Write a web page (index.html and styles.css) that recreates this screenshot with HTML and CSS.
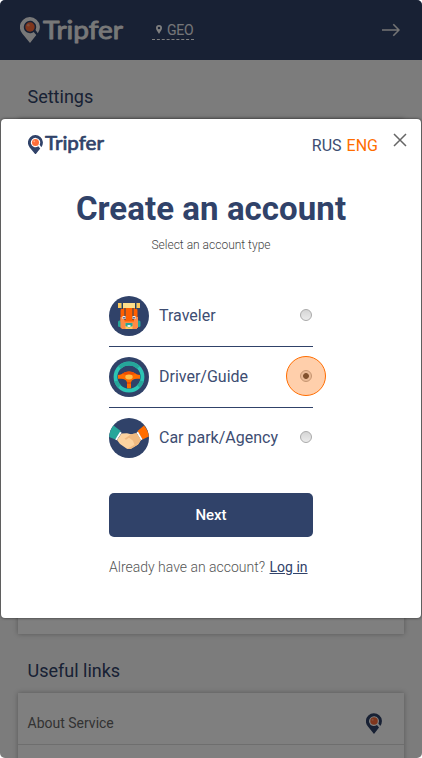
FILE: index.html
```
<!DOCTYPE html>
<html lang="en">
<head>
<meta charset="utf-8">
<title>Tripfer</title>
<link rel="stylesheet" href="styles.css">
</head>
<body>
<svg class="defs" aria-hidden="true">
  <symbol id="pin" viewBox="0 0 20 26">
    <path fill="currentColor" d="M17.800 16.200A10 10 0 1 0 2.200 16.500L10 26l6.300-8L13.700 15A6.200 6.200 0 1 1 15.500 12.900z"/>
    <circle class="pin-dot" cx="10" cy="10" r="4.700"/>
    <circle class="pin-shine" cx="8.300" cy="8.300" r="1.300"/>
  </symbol>
</svg>
<div class="screen">
  <header class="topbar">
    <div class="logo logo-large">
      <svg class="logo-pin"><use href="#pin"/></svg>
      <svg class="logo-word" viewBox="0 0 80 28"><text x="0" y="22" textLength="80" lengthAdjust="spacingAndGlyphs">Tripfer</text></svg>
    </div>
    <a class="geo">
      <svg class="geo-pin" viewBox="0 0 6 9"><path fill="currentColor" fill-rule="evenodd" d="M3 0a3 3 0 0 0-3 3c0 1.600 1.300 3 3 6 1.700-3 3-4.400 3-6a3 3 0 0 0-3-3zm0 1.700a1.300 1.300 0 1 1 0 2.600 1.300 1.300 0 0 1 0-2.600z"/></svg>
      <span>GEO</span>
    </a>
    <svg class="arrow" viewBox="0 0 18 14"><path d="M0 7h17M11.300 1.200 17 7l-5.700 5.800"/></svg>
  </header>
  <main class="page">
    <h2 class="section-title">Settings</h2>
    <section class="card card-settings"></section>
    <h2 class="section-title">Useful links</h2>
    <section class="card">
      <div class="row"><span>About Service</span><svg class="row-pin"><use href="#pin"/></svg></div>
      <div class="row"></div>
    </section>
  </main>
  <div class="overlay">
    <div class="modal">
      <div class="modal-head">
        <div class="logo logo-small">
          <svg class="logo-pin"><use href="#pin"/></svg>
          <svg class="logo-word" viewBox="0 0 80 28"><text x="0" y="22" textLength="80" lengthAdjust="spacingAndGlyphs">Tripfer</text></svg>
        </div>
        <div class="langs"><a>RUS</a><a class="active">ENG</a></div>
        <svg class="close" viewBox="0 0 14 14"><path d="m1 1 12 12M13 1 1 13"/></svg>
      </div>
      <h1>Create an account</h1>
      <p class="hint">Select an account type</p>
      <div class="options">
        <label class="option">
          <svg class="badge" viewBox="0 0 40 40">
            <circle cx="20" cy="20" r="20" fill="#304269"/>
            <rect x="9" y="24.500" width="22.500" height="6.500" rx="1.500" fill="#26a69a"/>
            <path fill="#ff5f00" d="M11.500 15q0-3.500 3-3.500h11q3 0 3 3.500v11h-17z"/>
            <path fill="#ff8a45" d="M11.500 21h4v11h-4zM25 21h4v11h-4zM12.500 25.500H28V33H12.500z"/>
            <rect x="9" y="7" width="22" height="5" rx="1.200" fill="#ffe08a"/>
            <path fill="#ffcb5b" d="M9 7h3v5H9zm19 0h3v5h-3z"/>
            <path fill="#26425b" d="M12.500 7H14v6h-1.500zM26 7h1.500v6H26zM15.500 12h1v12h-1zm8 0h1v12h-1z"/>
            <path fill="#e9eef2" d="M13.500 20h3v3h-3zm10 0h3v3h-3z"/>
            <path fill="#304269" d="M14.300 21h1.400v1.400h-1.400zm10 0h1.400v1.400h-1.400z"/>
            <path fill="#ffcb5b" d="M16.500 27h7v6h-7z"/>
            <path fill="#26a69a" d="M16.500 27h7v3L20 31.500 16.500 30z"/>
            <path fill="#e9eef2" d="M18.500 29h3v2h-3z"/>
          </svg>
          <span class="label">Traveler</span><i class="radio"></i>
        </label>
        <label class="option">
          <svg class="badge" viewBox="0 0 40 40">
            <circle cx="20" cy="20" r="20" fill="#304269"/>
            <circle cx="20" cy="20" r="13.500" fill="none" stroke="#2cc5b5" stroke-width="3.800"/>
            <path d="M10.500 10.500a13.500 13.500 0 0 1 19 0M10.500 29.500A13.500 13.500 0 0 1 7 24M29.500 29.500A13.500 13.500 0 0 0 33 24" fill="none" stroke="#26a69a" stroke-width="3.800"/>
            <path fill="#ff6d00" d="M9 18c4 0 6-3.500 11-3.500s7 3.500 11 3.500v3.800h-3c-3.300 0-5.500 1.200-6 3.700v5.700h-4v-5.700c-.5-2.500-2.700-3.700-6-3.700H9z"/>
            <path fill="#f04e00" d="M13 16.800c2-1.300 4-2.300 7-2.300s5 1 7 2.300l-3.500 1h-7zM18 25h4v2h-4z"/>
            <ellipse cx="20" cy="20" rx="3.700" ry="2.400" fill="#ffc14d"/>
          </svg>
          <span class="label">Driver/Guide</span><i class="radio checked"></i>
        </label>
        <label class="option">
          <svg class="badge" viewBox="0 0 40 40">
            <circle cx="20" cy="20" r="20" fill="#304269"/>
            <path fill="#26a69a" d="M.2 19A20 20 0 0 1 4.500 7.500L11.800 13 6.300 21.500z"/>
            <path fill="#ff6d00" d="M39.800 18.500A20 20 0 0 0 35 7.500L28.500 13l5 8.500z"/>
            <path fill="#fff" d="m11 13.800 1.700 1-5 7.500-1.500-.9zM29 13.500l-1.500 1.200 4.500 7.500 1.500-.9z"/>
            <path fill="#fcd3a0" d="m12.500 15.500 5.500-.3 4 1 5.500-1L32 22l-3 4.500-6.500 4q-2.500 1-5 0L11 26l-3-4z"/>
            <path fill="#efb980" d="m22 16.200 5.500-1L32 22l-3 4.500-6.500 4q-2 .7-4 .2l7-4-1.500-4-4-3-3 2-1.500-1z"/>
          </svg>
          <span class="label">Car park/Agency</span><i class="radio"></i>
        </label>
      </div>
      <button class="next">Next</button>
      <p class="login">Already have an account? <a>Log in</a></p>
    </div>
  </div>
</div>
</body>
</html>
```
FILE: styles.css
```
* { box-sizing: border-box; }
body { margin: 0; background: #fff; font-family: Roboto, sans-serif; color: #304269; }
h1, h2, p { margin: 0; }
.defs { position: absolute; width: 0; height: 0; }
.screen { position: relative; width: 422px; height: 758px; overflow: hidden; border-radius: 5px; background: #f8f8f8; }

.topbar { display: flex; align-items: center; height: 60px; padding: 0 22px 0 20px; background: #304269; color: #fff; }
.logo { display: flex; align-items: center; }
.logo-word { overflow: visible; }
.logo-word text { font: 400 25px Lato, sans-serif; fill: currentColor; stroke: currentColor; stroke-width: .9px; stroke-linejoin: round; }
.logo-large .logo-pin { width: 20px; height: 26px; margin-right: 3px; }
.logo-large .logo-word { width: 80px; height: 28px; margin-top: 1px; }
.logo-large { color: #f0f0f0; }
.pin-dot { fill: #ff6d3a; }
.pin-shine { fill: #ffa17d; }
.geo { display: flex; align-items: center; width: 42px; height: 20px; margin-left: 29px; padding-left: 4px; gap: 5px; border-bottom: 1px dashed #fff; font-size: 14px; letter-spacing: -.3px; }
.geo span { opacity: .9; }
.geo-pin { width: 6px; height: 9px; }
.arrow { width: 18px; height: 14px; margin-left: auto; fill: none; stroke: #e8e8e8; stroke-width: 1.6; }

.page { padding: 0 18px; }
.section-title { padding: 25px 9.500px 10px; font-size: 18px; font-weight: 400; line-height: 24px; }
.card { background: #fff; box-shadow: 0 0 5px rgba(0, 0, 0, .3); }
.card-settings { height: 515px; }
.row { display: flex; align-items: center; justify-content: space-between; height: 52px; padding: 8px 22px 0 9.500px; border-bottom: 1px solid #ddd; font-size: 14px; color: #666; }
.row-pin { width: 16px; height: 21px; margin-top: 2px; color: #304269; }

.overlay { position: absolute; inset: 0; padding: 119px 1px 0; background: rgba(0, 0, 0, .5); }
.modal { display: flex; flex-direction: column; align-items: center; height: 499px; border-radius: 4px; background: #fff; box-shadow: 0 0 3px rgba(0, 0, 0, .65); }
.modal-head { display: flex; align-items: flex-start; width: 100%; height: 70px; padding: 15px 14px 0 27px; }
.logo-small .logo-pin { width: 15px; height: 19.500px; margin-right: 2px; }
.logo-small .logo-word { width: 59px; height: 20.650px; margin-top: 0; }
.langs { display: flex; gap: 5px; margin: 1px 15px 0 auto; font-size: 16px; line-height: 21px; color: #3d4d72; }
.langs .active { color: #ff6d00; }
.close { width: 14px; height: 14px; margin-top: -1px; fill: none; stroke: #666; stroke-width: 1.500; }
h1 { font-size: 33px; line-height: 40px; font-weight: 700; letter-spacing: .06px; }
.hint { margin-top: 8px; font-size: 12px; line-height: 16px; font-weight: 300; color: #444; }
.options { width: 204px; margin-top: 33px; }
.option { display: flex; align-items: center; height: 61px; border-bottom: 1px solid #304269; }
.option:last-child { border-color: transparent; }
.badge { width: 40px; height: 40px; margin-right: 10px; flex: none; }
.label { margin-top: -1px; font-size: 16px; white-space: nowrap; color: #3d4d72; }
.radio { position: relative; flex: none; width: 12px; height: 12px; margin: -2px 1px 0 auto; border: 1px solid #aaa; border-radius: 50%; background: linear-gradient(#d5d5d5, #ebebeb); }
.radio.checked { background: radial-gradient(circle, #444 0 2.500px, #e0e0e0 3.300px); }
.radio.checked::after { content: ""; position: absolute; inset: -15px; border: 1px solid #ff6d00; border-radius: 50%; background: rgba(255, 109, 0, .33); }
.next { width: 204px; height: 44px; margin-top: 24px; border: 0; border-radius: 5px; background: #304269; color: #fff; font: 500 15px Roboto, sans-serif; }
.login { width: 204px; margin-top: 20px; font-size: 14px; line-height: 20px; font-weight: 300; color: #555; white-space: nowrap; }
.login a { margin-left: 1px; font-weight: 400; color: #304269; text-decoration: underline; }
```
